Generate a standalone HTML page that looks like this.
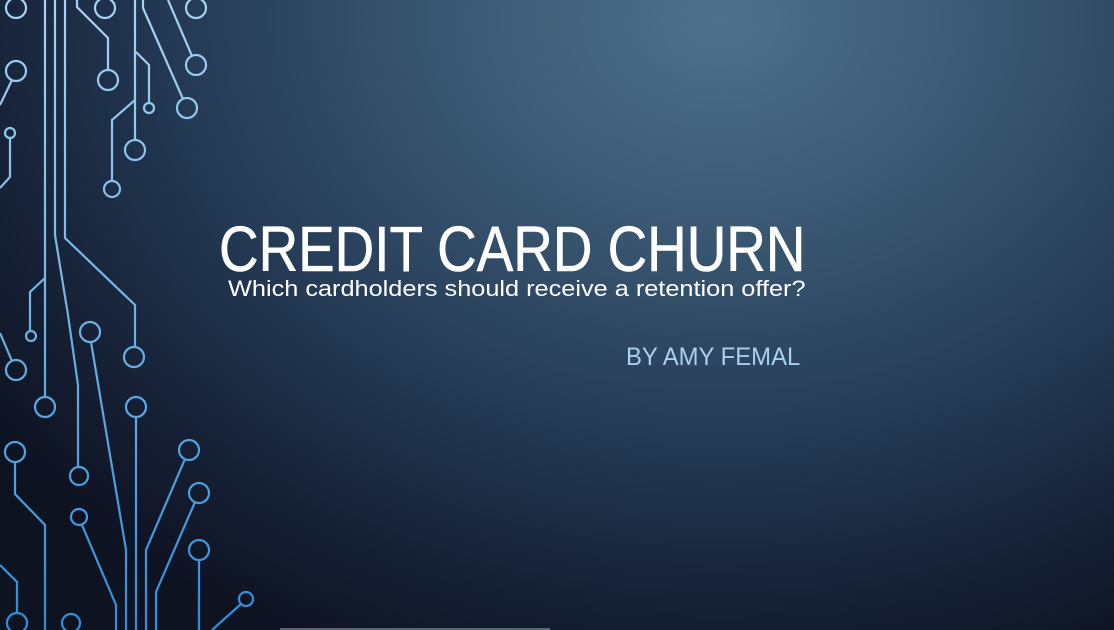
<!DOCTYPE html>
<html><head><style>
html,body{margin:0;padding:0}
body{width:1114px;height:630px;overflow:hidden;position:relative;
background:radial-gradient(ellipse 900px 700px at 720px 20px,#4e718b 0%,#3a5873 30%,#243a55 60%,#151f33 85%,#0e1322 100%);
font-family:"Liberation Sans",sans-serif}
.t{position:absolute;white-space:nowrap;transform-origin:0 0}
</style></head><body>
<svg width="1114" height="630" style="position:absolute;left:0;top:0">
<defs><linearGradient id="g" gradientUnits="userSpaceOnUse" x1="0" y1="0" x2="0" y2="630">
<stop offset="0" stop-color="#a6d4f3"/><stop offset="0.5" stop-color="#6fb3e6"/><stop offset="1" stop-color="#2f8ddb"/></linearGradient></defs>
<g fill="none" stroke="url(#g)" stroke-width="2.2">
<circle cx="16" cy="8" r="10"/><circle cx="105" cy="8" r="10"/><circle cx="196" cy="8" r="10"/>
<path d="M45 0V396"/><circle cx="45" cy="407" r="10"/>
<path d="M55 0V235L68 315L78 385V466"/><circle cx="79" cy="476" r="9"/>
<path d="M65 0V238L135 305V346"/><circle cx="134" cy="357" r="10"/>
<path d="M77 0V7L108 38V70"/><circle cx="108" cy="80" r="10"/>
<path d="M135 0V140"/><circle cx="135" cy="150" r="10"/>
<path d="M135 100L112 120V180"/><circle cx="112" cy="189" r="8"/>
<path d="M136 52L149 65V103"/><circle cx="149" cy="108" r="5"/>
<path d="M143 0V8L183 99"/><circle cx="187" cy="108" r="10"/>
<path d="M168 0L192 56"/><circle cx="196" cy="65" r="10"/>
<path d="M0 105L12 80"/><circle cx="16" cy="71" r="10"/>
<circle cx="10" cy="133" r="5"/><path d="M10 138V177L0 188"/>
<path d="M45 278L30 292V331"/><circle cx="31" cy="336" r="5"/>
<path d="M0 333L12 361"/><circle cx="16" cy="370" r="10"/>
<circle cx="90" cy="332" r="10"/><path d="M91 342L126 550V630"/>
<circle cx="136" cy="407" r="10"/><path d="M136 417V630"/>
<circle cx="15" cy="452" r="10"/><path d="M15 462V494L45 525V630"/>
<path d="M0 565L17 582V613"/><circle cx="17" cy="623" r="10"/>
<circle cx="79" cy="517" r="8"/><path d="M82 525L116 605V630"/>
<circle cx="71" cy="623" r="9"/>
<circle cx="189" cy="450" r="10"/><path d="M185 459L146 550V630"/>
<circle cx="199" cy="493" r="10"/><path d="M195 502L156 592V630"/>
<circle cx="199" cy="550" r="10"/><path d="M199 560V630"/>
<circle cx="246" cy="599" r="7"/><path d="M241 604L212 630"/>
</g>
<rect x="280" y="628" width="270" height="2" fill="#5a6675"/>
</svg>
<div class="t" style="left:219px;top:212px;font-size:64px;color:#fff;transform:scaleX(0.856);-webkit-text-stroke:0.6px #fff">CREDIT CARD CHURN</div>
<div class="t" style="left:228px;top:276px;font-size:22px;color:#fff;transform:scaleX(1.15)">Which cardholders should receive a retention offer?</div>
<div class="t" style="left:626px;top:343px;font-size:25px;color:#a8d0f1;transform:scaleX(0.955)">BY AMY FEMAL</div>
</body></html>
